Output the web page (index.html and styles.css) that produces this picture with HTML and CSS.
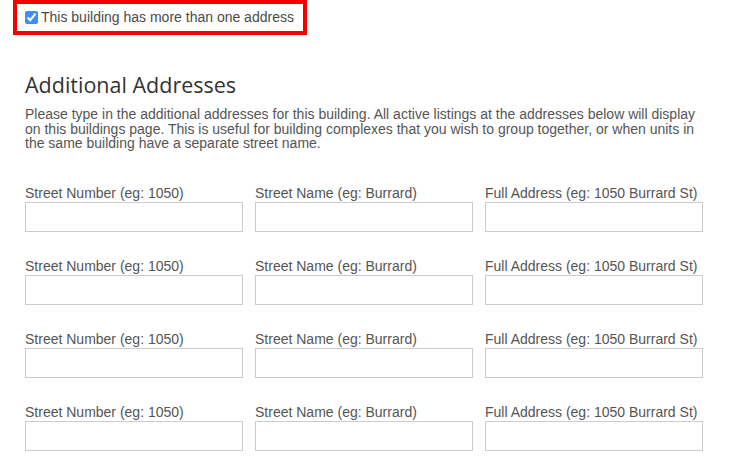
FILE: index.html
```html
<!DOCTYPE html>
<html>
<head>
<meta charset="utf-8">
<link rel="stylesheet" href="styles.css">
</head>
<body>
<div class="page">
  <label class="notice">
    <input type="checkbox" class="notice-check" checked>
    <span class="notice-text">This building has more than one address</span>
  </label>

  <h2 class="title">Additional Addresses</h2>
  <p class="intro">Please type in the additional addresses for this building. All active listings at the addresses below will display on this buildings page. This is useful for building complexes that you wish to group together, or when units in the same building have a separate street name.</p>

  <div class="rows">
    <div class="field"><label class="field-label">Street Number (eg: 1050)</label><input class="field-input" type="text"></div>
    <div class="field"><label class="field-label">Street Name (eg: Burrard)</label><input class="field-input" type="text"></div>
    <div class="field"><label class="field-label">Full Address (eg: 1050 Burrard St)</label><input class="field-input" type="text"></div>

    <div class="field"><label class="field-label">Street Number (eg: 1050)</label><input class="field-input" type="text"></div>
    <div class="field"><label class="field-label">Street Name (eg: Burrard)</label><input class="field-input" type="text"></div>
    <div class="field"><label class="field-label">Full Address (eg: 1050 Burrard St)</label><input class="field-input" type="text"></div>

    <div class="field"><label class="field-label">Street Number (eg: 1050)</label><input class="field-input" type="text"></div>
    <div class="field"><label class="field-label">Street Name (eg: Burrard)</label><input class="field-input" type="text"></div>
    <div class="field"><label class="field-label">Full Address (eg: 1050 Burrard St)</label><input class="field-input" type="text"></div>

    <div class="field"><label class="field-label">Street Number (eg: 1050)</label><input class="field-input" type="text"></div>
    <div class="field"><label class="field-label">Street Name (eg: Burrard)</label><input class="field-input" type="text"></div>
    <div class="field"><label class="field-label">Full Address (eg: 1050 Burrard St)</label><input class="field-input" type="text"></div>
  </div>
</div>
</body>
</html>
```

FILE: styles.css
```css
html, body {
  margin: 0;
  padding: 0;
  background: #fff;
}

body {
  font-family: "Liberation Sans", Arial, sans-serif;
  color: #555;
  overflow: hidden;
}

.page {
  width: 678px;
  padding: 0 0 0 25px;
}

.notice {
  display: inline-flex;
  align-items: center;
  gap: 3px;
  margin-left: -12px;
  border: 4px solid #f60000;
  padding: 5px 9px 6px 8px;
  line-height: 16px;
  font-size: 14px;
  color: #4a4a4a;
}

.notice-check {
  width: 13px;
  height: 13px;
  margin: 0;
  accent-color: #3d8ff5;
}

.title {
  margin: 36px 0 0 0;
  font-family: "Open Sans", sans-serif;
  font-weight: 400;
  font-size: 21.5px;
  line-height: 28px;
  color: #333;
}

.intro {
  margin: 8px 0 0 0;
  font-size: 14px;
  line-height: 14.5px;
  color: #555;
}

.rows {
  display: grid;
  grid-template-columns: repeat(3, 218px);
  column-gap: 12px;
  row-gap: 26px;
  margin-top: 34px;
}

.field {
  display: flex;
  flex-direction: column;
}

.field-label {
  font-size: 14px;
  line-height: 16px;
  color: #555;
  margin-bottom: 1px;
  white-space: nowrap;
}

.field-input {
  box-sizing: border-box;
  width: 218px;
  height: 30px;
  margin: 0;
  border: 1px solid #ccc;
  border-radius: 0;
  background: #fff;
  padding: 4px 6px;
  font-family: inherit;
  font-size: 14px;
  outline: none;
}
```
